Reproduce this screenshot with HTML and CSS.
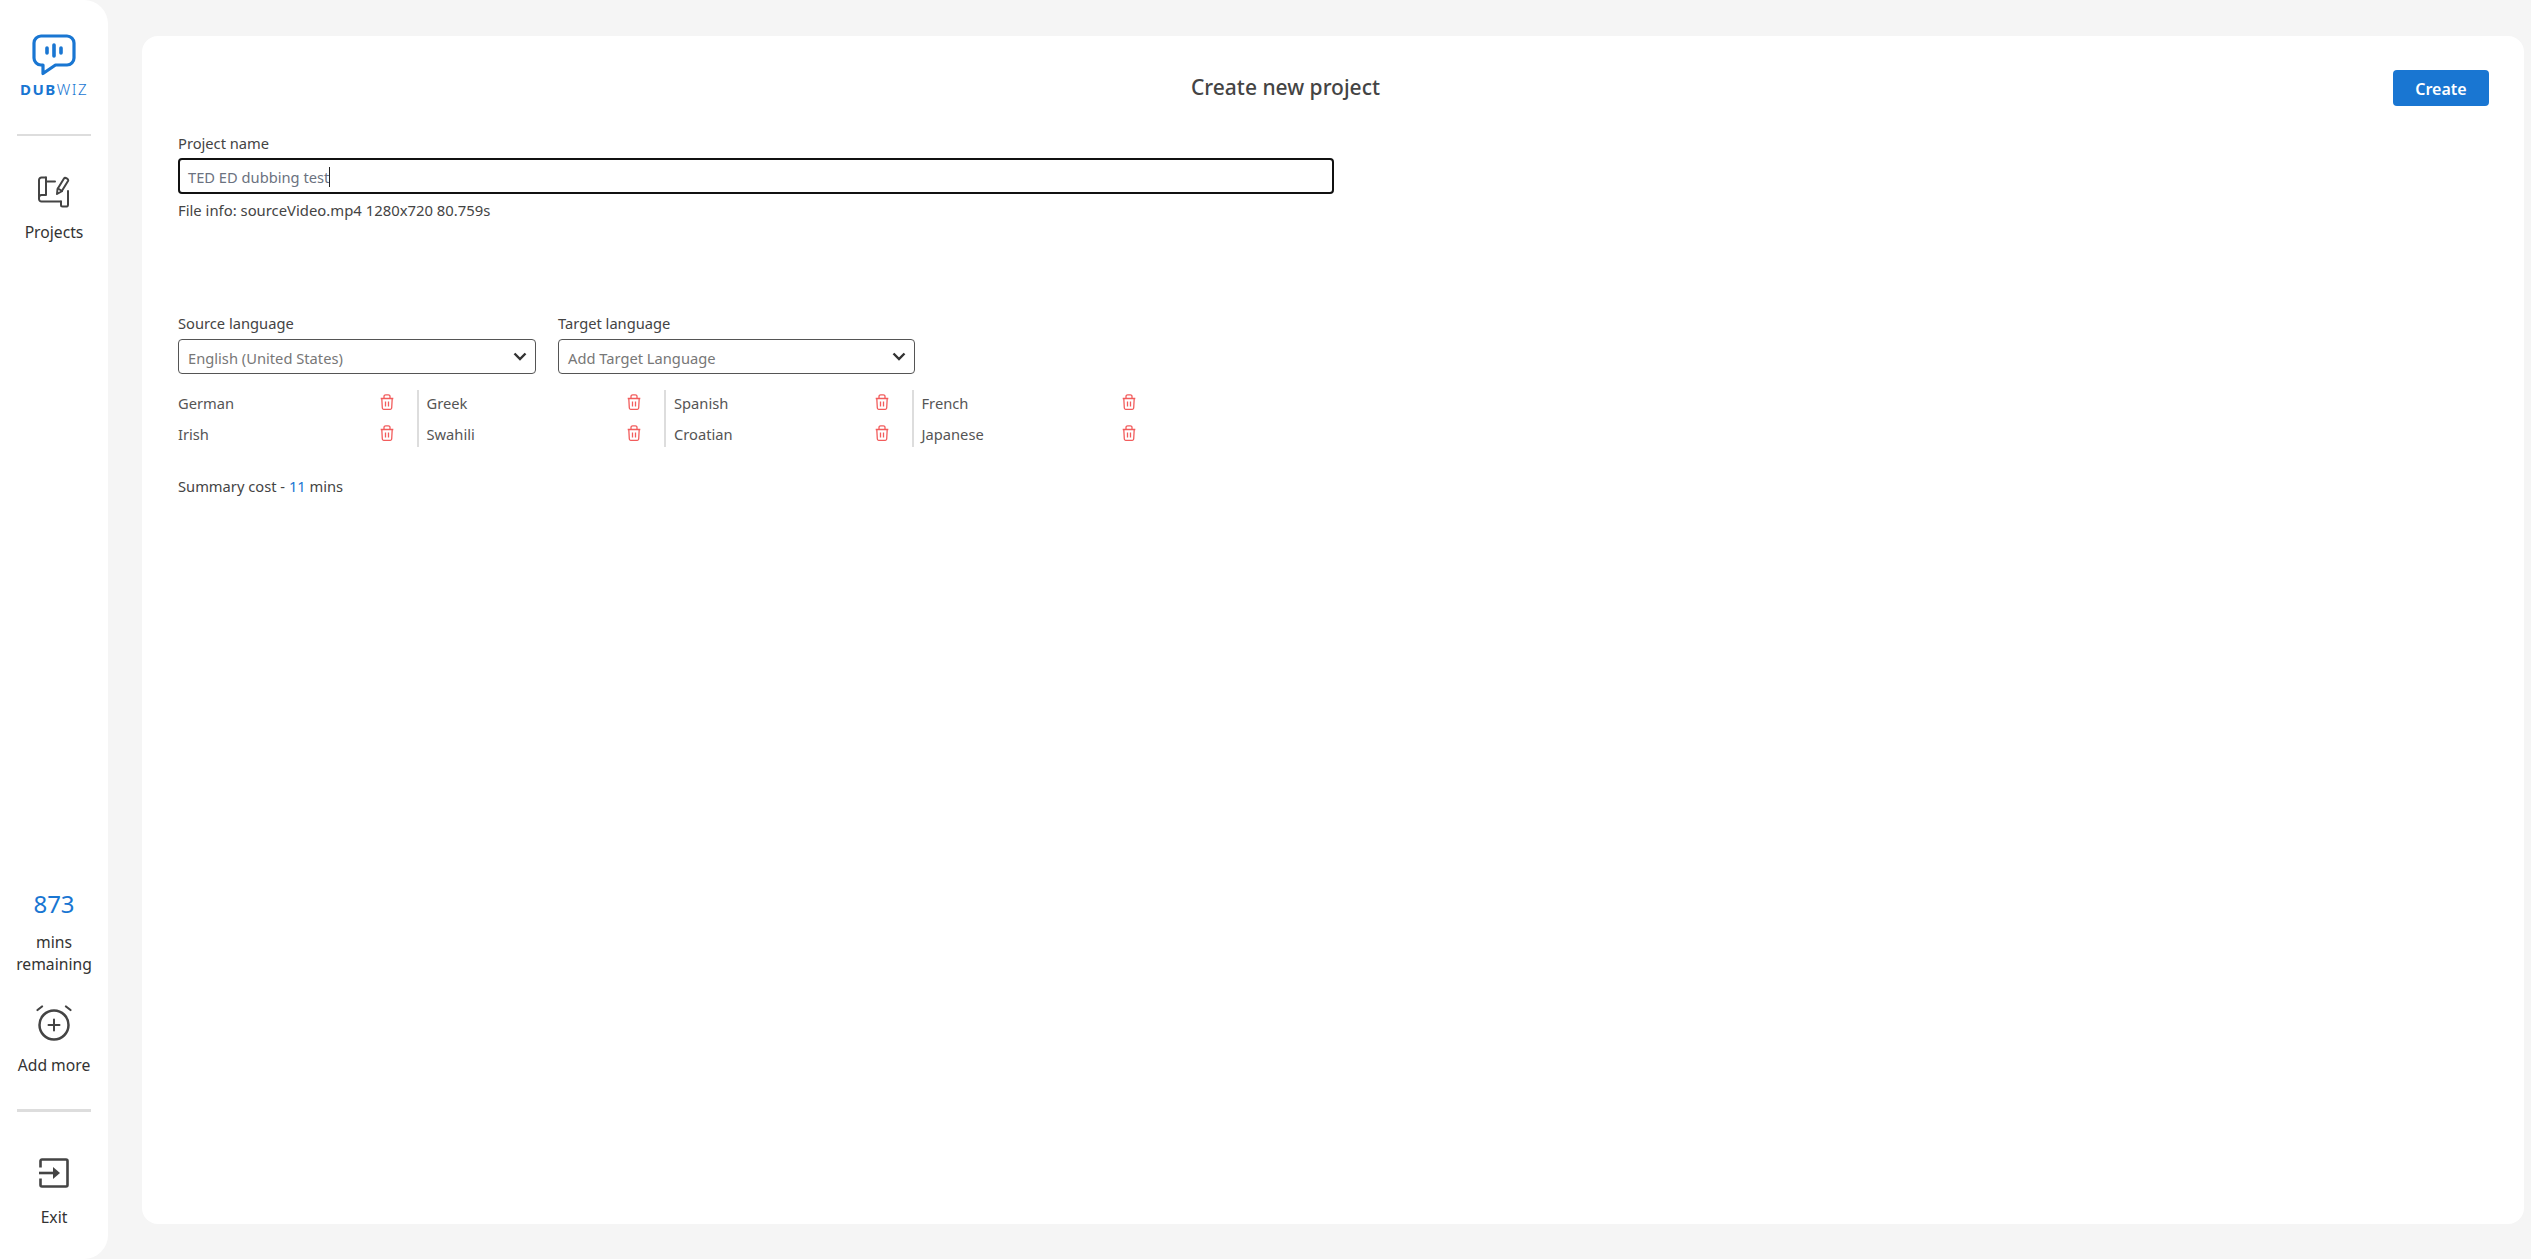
FILE: index.html
```html
<!DOCTYPE html>
<html lang="en">
<head>
<meta charset="utf-8">
<title>Create new project</title>
<link rel="stylesheet" href="styles.css">
</head>
<body>
<aside class="sidebar">
  <div class="side-top">
    <div class="logo">
      <svg class="logo-icon" width="44" height="42" viewBox="0 0 44 42" fill="none"><path d="M9 2h26a7 7 0 0 1 7 7v15a7 7 0 0 1-7 7H23.500L11 39.500V31H9a7 7 0 0 1-7-7V9a7 7 0 0 1 7-7z" stroke="#1976d2" stroke-width="3.200" stroke-linejoin="round"/><path d="M15 14v5M22 11v11M29 14v5" stroke="#1976d2" stroke-width="3.600" stroke-linecap="round"/></svg>
      <div class="logo-text"><b>DUB</b>WIZ</div>
    </div>
    <hr class="side-rule">
    <div class="nav-item projects">
      <svg width="32" height="32" viewBox="0 0 32 32" fill="none" stroke="#444" stroke-width="2" stroke-linejoin="round" stroke-linecap="round"><path d="M8 1.500H3.500A2.500 2.500 0 0 0 1 4V23a2.500 2.500 0 0 0 2.500 2.500H23"/><path d="M8 1.500V19H3.500A2.500 2.500 0 0 0 1 21.500"/><path d="M8 5.500H17"/><path d="M23 25.500V29a1.500 1.500 0 0 0 1.500 1.500H29A1.500 1.500 0 0 0 30 29V15"/><path d="M19 18L19.500 13L26 2.500C27 1 31 3 30 5L23.500 15.500Z"/><path d="M20 12.500L24 15"/></svg>
      <span>Projects</span>
    </div>
  </div>
  <div class="side-bottom">
    <div class="mins-value">873</div>
    <div class="mins-label">mins<br>remaining</div>
    <div class="nav-item add-more">
      <svg width="36" height="36" viewBox="0 0 36 36" fill="none" stroke="#444" stroke-width="2.500" stroke-linecap="round"><circle cx="18" cy="20" r="14.500"/><path d="M18 14.500v11M12.500 20h11" stroke-width="2"/><path d="M1.500 5L6 1.500M34.500 5L30 1.500" stroke-width="2.200"/></svg>
      <span>Add more</span>
    </div>
    <hr class="side-rule lower">
    <div class="nav-item exit">
      <svg width="30" height="30" viewBox="0 0 30 30" fill="none" stroke="#444" stroke-width="2.600" stroke-linejoin="round"><path d="M1.500 9.500V3A1.500 1.500 0 0 1 3 1.500h24A1.500 1.500 0 0 1 28.500 3v24a1.500 1.500 0 0 1-1.500 1.500H3A1.500 1.500 0 0 1 1.500 27v-6.500"/><path d="M0 15h14"/><path d="M14 9L21 15L14 21Z" fill="#444" stroke="none"/></svg>
      <span>Exit</span>
    </div>
  </div>
</aside>
<main class="card">
  <header class="card-head">
    <h1>Create new project</h1>
    <button class="create" type="button">Create</button>
  </header>
  <section class="name-field">
    <div class="label">Project name</div>
    <div class="input focused"><span>TED ED dubbing test</span><i class="caret"></i></div>
    <div class="file-info">File info: sourceVideo.mp4 1280x720 80.759s</div>
  </section>
  <section class="lang-fields">
    <div class="lang-field">
      <div class="label">Source language</div>
      <div class="select"><span>English (United States)</span><svg width="14" height="9" viewBox="0 0 14 9" fill="none" stroke="#333" stroke-width="2.400"><path d="M1.500 1.500L7 7l5.500-5.500"/></svg></div>
    </div>
    <div class="lang-field">
      <div class="label">Target language</div>
      <div class="select"><span>Add Target Language</span><svg width="14" height="9" viewBox="0 0 14 9" fill="none" stroke="#333" stroke-width="2.400"><path d="M1.500 1.500L7 7l5.500-5.500"/></svg></div>
    </div>
  </section>
  <section class="targets">
    <div class="col">
      <div class="row"><span>German</span><svg class="trash" viewBox="0 0 14 16"><use href="#trash"/></svg></div>
      <div class="row"><span>Irish</span><svg class="trash" viewBox="0 0 14 16"><use href="#trash"/></svg></div>
    </div>
    <div class="col">
      <div class="row"><span>Greek</span><svg class="trash" viewBox="0 0 14 16"><use href="#trash"/></svg></div>
      <div class="row"><span>Swahili</span><svg class="trash" viewBox="0 0 14 16"><use href="#trash"/></svg></div>
    </div>
    <div class="col">
      <div class="row"><span>Spanish</span><svg class="trash" viewBox="0 0 14 16"><use href="#trash"/></svg></div>
      <div class="row"><span>Croatian</span><svg class="trash" viewBox="0 0 14 16"><use href="#trash"/></svg></div>
    </div>
    <div class="col">
      <div class="row"><span>French</span><svg class="trash" viewBox="0 0 14 16"><use href="#trash"/></svg></div>
      <div class="row"><span>Japanese</span><svg class="trash" viewBox="0 0 14 16"><use href="#trash"/></svg></div>
    </div>
  </section>
  <div class="summary">Summary cost - <span class="num">11</span> mins</div>
</main>
<svg class="defs" width="0" height="0"><defs><g id="trash" fill="none" stroke="#f25c5c" stroke-width="1.300" stroke-linejoin="round"><path d="M.7 4.500h12.600M1.800 4.500l.5 9.300a1.500 1.500 0 0 0 1.500 1.500h6.400a1.500 1.500 0 0 0 1.500-1.500l.5-9.300"/><path d="M4 4.500V2.500A1.700 1.700 0 0 1 5.700.8h2.600A1.700 1.700 0 0 1 10 2.500v2"/><path d="M5.500 7.500v5M8.500 7.500v5"/></g></defs></svg>
</body>
</html>
```
FILE: styles.css
```css
* { box-sizing: border-box; }
body {
  margin: 0;
  height: 1259px;
  overflow: hidden;
  background: #f5f5f5;
  display: flex;
  font-family: "Noto Sans", "Open Sans", sans-serif;
  color: #444;
}
.defs { position: absolute; }
.sidebar {
  width: 108px;
  flex: none;
  background: #fff;
  border-radius: 0 24px 24px 0;
  display: flex;
  flex-direction: column;
  justify-content: space-between;
  align-items: center;
  padding: 34px 0 0;
}
.side-top, .side-bottom {
  display: flex;
  flex-direction: column;
  align-items: center;
  width: 100%;
}
.logo { display: flex; flex-direction: column; align-items: center; }
.logo-icon { display: block; }
.logo-text {
  font-size: 15px;
  line-height: 16px;
  letter-spacing: 1.5px;
  color: #1976d2;
  margin-top: 5px;
  font-weight: 300;
}
.logo-text b { font-weight: 700; }
.side-rule {
  width: 74px;
  height: 2px;
  background: #ddd;
  border: 0;
  margin: 37px 0 0;
}
.side-rule.lower { height: 3px; margin-top: 33px; }
.nav-item {
  display: flex;
  flex-direction: column;
  align-items: center;
  font-size: 15.700px;
  line-height: 22px;
  color: #333;
}
.projects { margin-top: 40px; }
.projects span { margin-top: 13px; }
.mins-value { font-size: 24px; line-height: 32px; color: #1976d2; }
.mins-label { font-size: 15.700px; line-height: 22px; text-align: center; color: #333; margin-top: 11px; }
.add-more { margin-top: 30px; }
.add-more span { margin-top: 13px; }
.exit { margin-top: 46px; padding-bottom: 31px; }
.exit span { margin-top: 18px; }
.card {
  flex: 1;
  margin: 36px 7px 35px 34px;
  background: #fff;
  border-radius: 16px;
  padding: 34px 35px 0 36px;
}
.card-head { display: flex; align-items: center; height: 36px; }
.card-head h1 {
  flex: 1;
  margin: -3px 0 0;
  text-align: center;
  font-size: 21px;
  font-weight: 500;
  color: #444;
}
.create {
  width: 96px;
  height: 36px;
  background: #1976d2;
  color: #fff;
  border: 0;
  border-radius: 4px;
  padding: 2px 0 0;
  font: 600 16px "Noto Sans", sans-serif;
}
.name-field { width: 1156px; margin-top: 27px; }
.label { font-size: 14.700px; line-height: 20px; color: #444; }
.input {
  height: 36px;
  border: 2.500px solid #111;
  border-radius: 4px;
  margin-top: 5px;
  padding: 1px 0 0 8px;
  display: flex;
  align-items: center;
  font-size: 14.700px;
  color: #6b7280;
}
.caret { width: 1px; height: 20px; background: #222; }
.file-info { font-size: 14.850px; line-height: 20px; margin-top: 6px; }
.lang-fields { display: flex; gap: 22px; margin-top: 93px; }
.lang-field { width: 358px; }
.lang-field:last-child { width: 357px; }
.select {
  height: 35px;
  margin-top: 6px;
  border: 1px solid #555;
  border-radius: 4px;
  padding: 3px 8px 0 9px;
  display: flex;
  align-items: center;
  justify-content: space-between;
  font-size: 14.700px;
  color: #777;
}
.select svg { margin-top: -4px; }
.targets { display: flex; margin-top: 16px; }
.col {
  width: 247.500px;
  padding: 0 23px 0 8px;
  border-left: 2px solid #ddd;
  display: flex;
  flex-direction: column;
  gap: 5px;
}
.col:first-child { border-left: 0; padding-left: 0; width: 238.500px; padding-right: 23px; }
.row {
  height: 26px;
  display: flex;
  align-items: center;
  justify-content: space-between;
  font-size: 14.700px;
  color: #555;
}
.trash { width: 14px; height: 16px; margin-top: -2px; }
.summary { font-size: 14.700px; line-height: 20px; margin-top: 29px; color: #444; }
.num { color: #1976d2; }
```
